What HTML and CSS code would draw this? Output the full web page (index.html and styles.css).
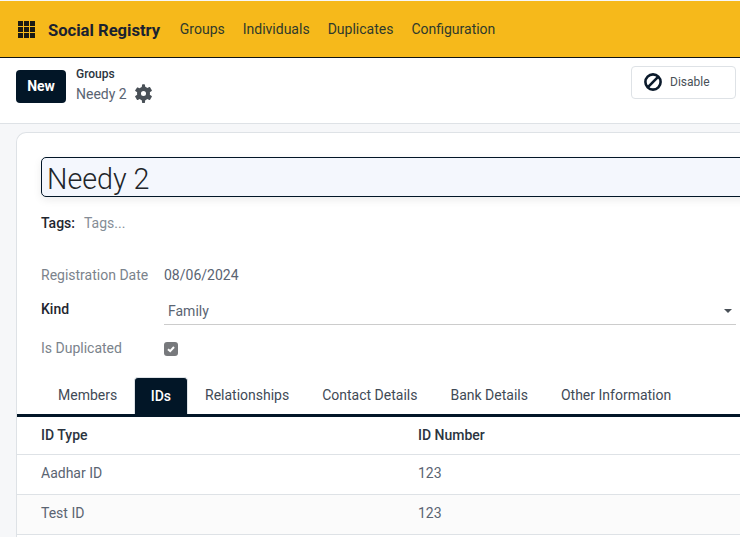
FILE: index.html
```html
<!DOCTYPE html>
<html lang="en">
<head>
    <meta charset="UTF-8">
    <meta name="viewport" content="width=device-width, initial-scale=1.0">
    <title>Needy 2 - Social Registry</title>
    <link rel="stylesheet" href="styles.css">
</head>
<body>
    <header class="navbar">
        <svg class="apps-icon" width="17" height="17" viewBox="0 0 17 17" fill="#1a1a14">
            <rect x="0" y="0" width="5" height="5"/><rect x="6" y="0" width="5" height="5"/><rect x="12" y="0" width="5" height="5"/>
            <rect x="0" y="6" width="5" height="5"/><rect x="6" y="6" width="5" height="5"/><rect x="12" y="6" width="5" height="5"/>
            <rect x="0" y="12" width="5" height="5"/><rect x="6" y="12" width="5" height="5"/><rect x="12" y="12" width="5" height="5"/>
        </svg>
        <span class="brand">Social Registry</span>
        <nav class="menu">
            <a>Groups</a>
            <a>Individuals</a>
            <a>Duplicates</a>
            <a>Configuration</a>
        </nav>
    </header>

    <div class="control-panel">
        <button class="btn-new">New</button>
        <div class="breadcrumb">
            <div class="crumb-parent">Groups</div>
            <div class="crumb-current">
                <span>Needy 2</span>
                <svg width="19" height="19" viewBox="0 0 24 24" fill="#495057">
                    <path fill-rule="evenodd" d="M20 13.500a8 8 0 0 0 0-3l2.300-1.700a.7.7 0 0 0 .2-.9l-2.200-3.800a.7.7 0 0 0-.9-.3l-2.700 1.100a8 8 0 0 0-2.500-1.500L13.800 1a.7.7 0 0 0-.7-.6h-2.200a.7.7 0 0 0-.7.6l-.4 2.900a8 8 0 0 0-2.500 1.500L4.600 4.300a.7.7 0 0 0-.9.3L1.500 7.900a.7.7 0 0 0 .2.9L4 10.500a8 8 0 0 0 0 3l-2.300 1.700a.7.7 0 0 0-.2.9l2.200 3.800a.7.7 0 0 0 .9.3l2.700-1.100a8 8 0 0 0 2.500 1.500l.4 2.900a.7.7 0 0 0 .7.6h2.200a.7.7 0 0 0 .7-.6l.4-2.900a8 8 0 0 0 2.500-1.500l2.700 1.100a.7.7 0 0 0 .9-.3l2.200-3.800a.7.7 0 0 0-.2-.9zM12 15.200a3.200 3.200 0 1 1 0-6.400 3.200 3.200 0 0 1 0 6.400z"/>
                </svg>
            </div>
        </div>
        <button class="btn-disable">
            <svg width="18" height="18" viewBox="0 0 18 18" fill="none" stroke="#0b1a2b" stroke-width="2.600">
                <circle cx="9" cy="9" r="7.600"/>
                <path d="M3.700 14.300 14.300 3.700"/>
            </svg>
            <span>Disable</span>
        </button>
    </div>

    <main class="content">
        <section class="sheet">
            <div class="sheet-head">
                <div class="title-input">Needy 2</div>
                <div class="tags">
                    <span class="tags-label">Tags:</span>
                    <span class="tags-placeholder">Tags...</span>
                </div>
                <div class="field field-date">
                    <span class="field-label">Registration Date</span>
                    <span class="field-value">08/06/2024</span>
                </div>
                <div class="field field-kind">
                    <span class="field-label strong">Kind</span>
                    <div class="select">
                        <span>Family</span>
                        <i class="caret"></i>
                    </div>
                </div>
                <div class="field field-dup">
                    <span class="field-label">Is Duplicated</span>
                    <span class="checkbox">
                        <svg width="10" height="10" viewBox="0 0 10 10" fill="none" stroke="#fff" stroke-width="2">
                            <path d="M2 5.200 4.200 7.200 8 3"/>
                        </svg>
                    </span>
                </div>
            </div>

            <div class="tabs">
                <a class="tab">Members</a>
                <a class="tab active">IDs</a>
                <a class="tab">Relationships</a>
                <a class="tab">Contact Details</a>
                <a class="tab">Bank Details</a>
                <a class="tab">Other Information</a>
            </div>

            <table class="ids-table">
                <thead>
                    <tr><th>ID Type</th><th>ID Number</th></tr>
                </thead>
                <tbody>
                    <tr><td>Aadhar ID</td><td>123</td></tr>
                    <tr class="striped"><td>Test ID</td><td>123</td></tr>
                </tbody>
            </table>
        </section>
    </main>
</body>
</html>
```

FILE: styles.css
```css
* {
    box-sizing: border-box;
}
html, body {
    margin: 0;
    height: 537px;
    overflow: hidden;
}
body {
    font-family: Roboto, "Liberation Sans", sans-serif;
    font-size: 14px;
    color: #495057;
    background-color: #f6f7f9;
    padding-top: 1px;
}
.navbar {
    display: flex;
    align-items: center;
    height: 57px;
    background-color: #f6b91b;
    border-bottom: 1px solid #0e1416;
    padding-left: 18px;
}
.brand {
    font-size: 16.600px;
    font-weight: 700;
    color: #1a2230;
    margin-left: 13px;
    margin-right: 19.600px;
    padding-top: 2px;
}
.menu {
    display: flex;
    gap: 18px;
}
.menu a {
    color: #2f3a2c;
}
.control-panel {
    display: flex;
    align-items: flex-start;
    height: 66px;
    background-color: #fff;
    border-bottom: 1px solid #dee2e6;
    padding: 12px 4px 0 16px;
}
.btn-new {
    width: 50px;
    height: 33px;
    border: none;
    border-radius: 4px;
    background-color: #021627;
    color: #fff;
    font: 700 14px Roboto, sans-serif;
    padding: 0 0 2px;
}
.breadcrumb {
    margin-left: 10px;
    flex: 1;
}
.crumb-parent {
    font-size: 12px;
    font-weight: 500;
    color: #2b3440;
    line-height: 14px;
    margin-top: -3px;
}
.crumb-current {
    display: flex;
    align-items: center;
    gap: 7px;
    margin-top: 3px;
    color: #5a6472;
}
.btn-disable {
    display: flex;
    align-items: center;
    gap: 8px;
    width: 105px;
    height: 33px;
    margin-top: -4px;
    padding: 0 0 1px 12px;
    background-color: #fff;
    border: 1px solid #dee2e6;
    border-radius: 4px;
    font: 12px Roboto, sans-serif;
    color: #495057;
}
.content {
    padding: 8px 0 0 16px;
}
.sheet {
    width: 724px;
    height: 405px;
    background-color: #fff;
    border: 1px solid #dee2e6;
    border-right: none;
    border-bottom: none;
    border-radius: 10px 0 0 0;
}
.sheet-head {
    padding: 24px 0 0 24px;
}
.title-input {
    width: 720px;
    height: 40px;
    line-height: 40px;
    font-size: 28.700px;
    font-weight: 300;
    color: #212529;
    background-color: #f4f7fd;
    border: 1px solid #021627;
    border-radius: 5px;
    padding: 1px 0 0 5px;
    box-shadow: 0 3px 8px rgba(0, 0, 0, 0.08);
}
.tags {
    display: flex;
    gap: 9px;
    margin-top: 18px;
    line-height: 17px;
}
.tags-label {
    font-weight: 500;
    color: #1f2630;
}
.tags-placeholder {
    color: #858d96;
}
.field {
    display: flex;
    align-items: center;
}
.field-label {
    width: 123px;
    color: #7b838c;
}
.field-label.strong {
    color: #1f2630;
    font-weight: 500;
    padding-bottom: 2px;
}
.field-value {
    color: #5a6472;
}
.field-date {
    margin-top: 34px;
    height: 17px;
}
.field-kind {
    margin-top: 11px;
}
.select {
    display: flex;
    align-items: center;
    justify-content: space-between;
    width: 572px;
    height: 31px;
    padding: 3px 4px 0;
    border-bottom: 1px solid #ccc;
    color: #5a6472;
}
.caret {
    border-left: 4px solid transparent;
    border-right: 4px solid transparent;
    border-top: 4px solid #495057;
}
.field-dup {
    margin-top: 14px;
    height: 17px;
}
.checkbox {
    display: flex;
    align-items: center;
    justify-content: center;
    width: 14px;
    height: 14px;
    margin-top: 3px;
    background-color: #77797c;
    border-radius: 3px;
}
.tabs {
    display: flex;
    align-items: flex-start;
    height: 40px;
    margin-top: 21px;
    padding-left: 24px;
    border-bottom: 3px solid #021627;
}
.tab {
    padding: 0 16.500px;
    line-height: 37px;
    color: #3f4a56;
}
.tab:first-child {
    padding: 0 17px;
}
.tab.active {
    height: 37px;
    background-color: #021627;
    color: #fff;
    font-weight: 500;
    border: 1px solid #dee2e6;
    border-bottom: none;
    border-radius: 4px 4px 0 0;
    line-height: 37px;
    padding: 0 15.500px;
    margin-right: 1px;
}
.ids-table {
    width: 100%;
    border-collapse: separate;
    border-spacing: 0;
    table-layout: fixed;
}
.ids-table th, .ids-table td {
    text-align: left;
    padding: 0 0 0 24px;
    border-bottom: 1px solid #dee2e6;
}
.ids-table th:first-child, .ids-table td:first-child {
    width: 377px;
}
.ids-table th {
    height: 38px;
    padding-bottom: 2px;
    font-weight: 500;
    color: #2b3440;
}
.ids-table td {
    height: 40px;
    padding-bottom: 3px;
    color: #5a6472;
}
.striped td {
    background-color: #fbfbfb;
}
```
